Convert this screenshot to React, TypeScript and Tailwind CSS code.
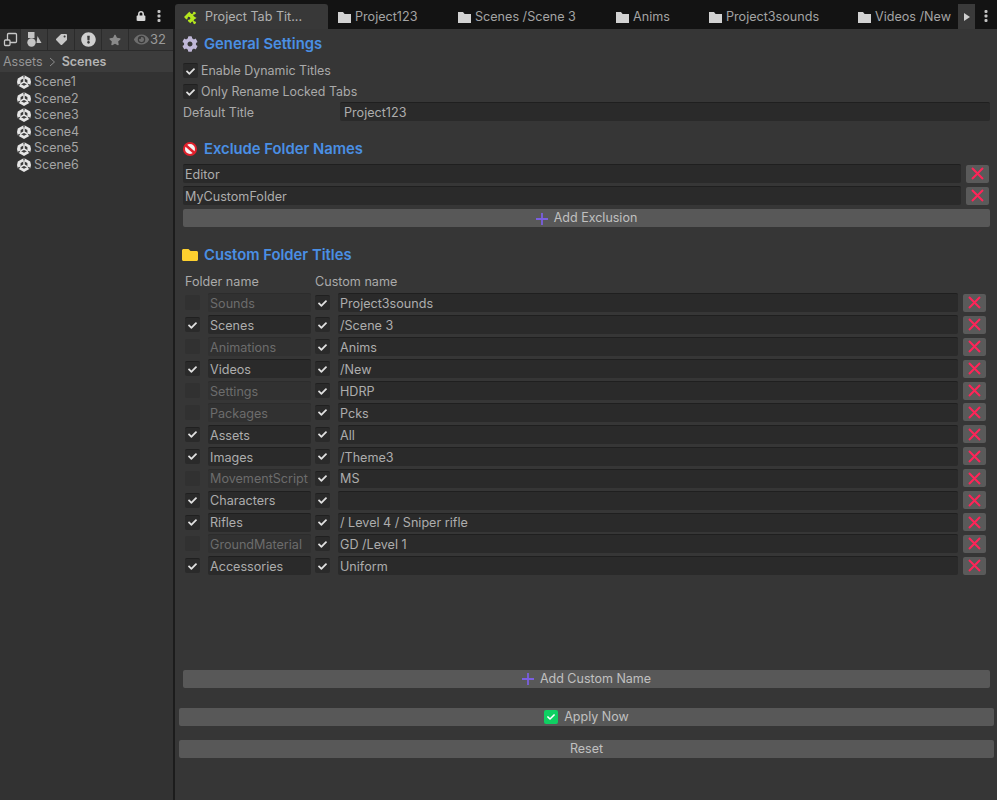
import React from "react";
import { FaLock, FaTag, FaStar, FaEye, FaFolder, FaCog, FaPuzzlePiece, FaExclamationCircle, FaCheck } from "react-icons/fa";

const Dots = () => (
  <svg width="4" height="12" viewBox="0 0 4 12" fill="#c4c4c4"><rect x="0.5" y="0" width="3" height="3" rx="1" /><rect x="0.5" y="4.5" width="3" height="3" rx="1" /><rect x="0.5" y="9" width="3" height="3" rx="1" /></svg>
);

const Folder = () => (
  <svg width="13" height="11" viewBox="0 0 13 11" className="shrink-0"><path d="M0 0h5l1.6 2H13v9H0z" fill="#d2d2d2" /></svg>
);

const UnityIcon = () => (
  <svg width="14" height="14" viewBox="0 0 14 14" className="shrink-0">
    <path d="M7 0 13.2 3.4 14 7l-.8 3.6L7 14 .8 10.6 0 7l.8-3.6z" fill="#e6e6e6" />
    <path d="M7 3.2 10.4 5.1v3.8L7 10.8 3.6 8.9V5.1z" fill="#3a3a3a" />
    <path d="M7 7V3.2M7 7l3.4 1.9M7 7 3.6 8.9" stroke="#e6e6e6" strokeWidth="1.5" />
    <path d="M7 0v2.4M13.4 10.6 11.2 9.4M.6 10.6 2.8 9.4" stroke="#3a3a3a" strokeWidth="1.2" />
  </svg>
);

const X = () => (
  <button className="w-[23px] h-[18px] bg-[#5a5a5a] rounded-[2px] flex items-center justify-center shrink-0">
    <svg width="13" height="13" viewBox="0 0 13 13"><path d="M1 1l11 11M12 1 1 12" stroke="#ff2458" strokeWidth="2" /></svg>
  </button>
);

const Check = ({ on = true }: { on?: boolean }) => (
  <div className={`w-[15px] h-[15px] rounded-[2px] flex items-center justify-center shrink-0 ${on ? "bg-[#2a2a2a] border-t border-[#202020]" : "bg-[#313131]"}`}>
    {on && <FaCheck className="text-[#e0e0e0] text-[9px]" />}
  </div>
);

const Field = ({ children, cls, dim = false }: { children?: React.ReactNode; cls: string; dim?: boolean }) => (
  <div className={`h-[19px] pt-[2px] rounded-[2px] flex items-center text-[12.6px] leading-none truncate ${dim ? "bg-[#313131] border-t border-[#2c2c2c] text-[#6c6c6c]" : "bg-[#2a2a2a] border-t border-[#1f1f1f] text-[#adadad]"} ${cls}`}>{children}</div>
);

const Btn = ({ children, cls }: { children: React.ReactNode; cls: string }) => (
  <div className={`h-[18px] pt-[1px] bg-[#585858] rounded-[2px] flex items-center justify-center gap-[6px] text-[#c0c0c0] text-[12.5px] leading-none ${cls}`}>{children}</div>
);

const Plus = () => (
  <svg width="12" height="12" viewBox="0 0 12 12"><path d="M6 0v12M0 6h12" stroke="#7a5fe0" strokeWidth="1.8" /></svg>
);

const Heading = ({ icon, children, cls }: { icon: React.ReactNode; children: React.ReactNode; cls: string }) => (
  <div className={`flex items-center h-[20px] ${cls}`}>
    <div className="w-[17px] flex justify-center shrink-0">{icon}</div>
    <div className="ml-[6px] text-[#4a8fe4] text-[14.8px] font-semibold leading-none">{children}</div>
  </div>
);

const rows: [boolean, string, string][] = [
  [false, "Sounds", "Project3sounds"],
  [true, "Scenes", "/Scene 3"],
  [false, "Animations", "Anims"],
  [true, "Videos", "/New"],
  [false, "Settings", "HDRP"],
  [false, "Packages", "Pcks"],
  [true, "Assets", "All"],
  [true, "Images", "/Theme3"],
  [false, "MovementScript", "MS"],
  [true, "Characters", ""],
  [true, "Rifles", "/ Level 4 / Sniper rifle"],
  [false, "GroundMaterial", "GD /Level 1"],
  [true, "Accessories", "Uniform"],
];

const tabs: [string, string][] = [
  ["Project123", "w-[120px]"],
  ["Scenes /Scene 3", "w-[158px]"],
  ["Anims", "w-[93px]"],
  ["Project3sounds", "w-[149px]"],
  ["Videos /New", "w-[110px]"],
];

export default function App() {
  return (
    <div className="w-[997px] h-[800px] overflow-hidden bg-[#363636] flex flex-col text-[12.6px] text-[#aaaaaa]" style={{ fontFamily: "Inter, 'Liberation Sans', sans-serif" }}>
      {/* top strip */}
      <div className="h-[29px] bg-[#131313] flex shrink-0">
        <div className="w-[175px] flex items-center justify-end gap-[11px] pr-[14px] pt-[3px] shrink-0 text-[#d8d8d8]">
          <FaLock className="text-[10px]" />
          <Dots />
        </div>
        <div className="w-[153px] mt-[4px] pt-[1px] bg-[#383838] rounded-t-[3px] flex items-center pl-[11px] gap-[6px] shrink-0">
          <FaPuzzlePiece className="text-[#b4e61e] text-[13px] rotate-45" />
          <span className="text-[#b0b0b0]">Project Tab Tit...</span>
        </div>
        {tabs.map(([t, w]) => (
          <div key={t} className={`${w} flex items-center pl-[10px] pt-[5px] gap-[4px] shrink-0 text-[#a4a4a4] whitespace-nowrap`}>
            <Folder />
            <span>{t}</span>
          </div>
        ))}
        <div className="w-[17px] mt-[4px] bg-[#3a3a3a] flex items-center justify-center shrink-0">
          <svg width="6" height="8" viewBox="0 0 6 8"><path d="M0 0l6 4-6 4z" fill="#d0d0d0" /></svg>
        </div>
        <div className="flex-1 flex items-center justify-center pt-[3px]"><Dots /></div>
      </div>

      <div className="flex flex-1 min-h-0">
        {/* left panel */}
        <div className="w-[173px] bg-[#323232] flex flex-col shrink-0">
          <div className="h-[22px] bg-[#3a3a3a] border-b border-[#2b2b2b] flex items-center text-[#9a9a9a] shrink-0">
            <div className="w-[21px] h-[21px] flex items-center justify-center border-r border-[#2b2b2b] bg-[#2f2f2f]">
              <svg width="15" height="15" viewBox="0 0 15 15" fill="none" stroke="#c8c8c8" strokeWidth="1.3"><rect x="4.5" y="1.5" width="9" height="9" rx="1" /><rect x="1.5" y="8" width="5.5" height="5.5" rx="1" fill="#2f2f2f" /></svg>
            </div>
            <div className="w-[27px] h-[21px] flex items-center justify-center border-r border-[#2b2b2b]">
              <svg width="15" height="15" viewBox="0 0 15 15" fill="#c4c4c4"><circle cx="4.5" cy="10.5" r="4.2" /><rect x="1" y="0" width="6.5" height="6" /><path d="M10.5 4l4 7h-5z" /></svg>
            </div>
            <div className="w-[27px] h-[21px] flex items-center justify-center border-r border-[#2b2b2b]"><FaTag className="text-[#c8c8c8] text-[11px] -scale-x-100" /></div>
            <div className="w-[27px] h-[21px] flex items-center justify-center border-r border-[#2b2b2b]"><FaExclamationCircle className="text-[#d0d0d0] text-[15px]" /></div>
            <div className="w-[27px] h-[21px] flex items-center justify-center border-r border-[#2b2b2b]"><FaStar className="text-[#8a8a8a] text-[12px]" /></div>
            <div className="flex items-center gap-[1px] pl-[5px] text-[13px] leading-none">
              <FaEye className="text-[#6e6e6e] text-[15px]" />
              <span>32</span>
            </div>
          </div>
          <div className="h-[21px] pt-[1px] bg-[#3c3c3c] flex items-center pl-[3px] gap-[6px] text-[12.5px] leading-none shrink-0">
            <span className="text-[#969696]">Assets</span>
            <svg width="7" height="10" viewBox="0 0 7 10" fill="none" stroke="#8c8c8c" strokeWidth="1"><path d="M1 1l4.5 4L1 9" /></svg>
            <span className="text-[#b4b4b4] font-semibold">Scenes</span>
          </div>
          <div className="pt-[2px] pl-[17px] flex flex-col">
            {["Scene1", "Scene2", "Scene3", "Scene4", "Scene5", "Scene6"].map((s) => (
              <div key={s} className="h-[16.6px] flex items-center gap-[3px] text-[#a4a4a4] text-[12.5px] leading-none">
                <UnityIcon />
                <span>{s}</span>
              </div>
            ))}
          </div>
        </div>
        <div className="w-[2px] bg-[#1c1c1c] shrink-0" />

        {/* right panel */}
        <div className="flex-1 flex flex-col min-w-0">
          <Heading cls="mt-[5px] ml-[6px]" icon={<FaCog className="text-[#c0b8d8] text-[16px]" />}>General Settings</Heading>
          <div className="mt-[6px] ml-[8px] h-[21px] flex items-center gap-[3px] text-[12.45px]"><Check /><span className="pt-[1px]">Enable Dynamic Titles</span></div>
          <div className="ml-[8px] h-[21px] flex items-center gap-[3px] text-[12.45px]"><Check /><span className="pt-[1px]">Only Rename Locked Tabs</span></div>
          <div className="ml-[8px] mr-[7px] h-[19px] flex items-center">
            <span className="w-[157px] shrink-0 text-[12.45px] pt-[3px]">Default Title</span>
            <Field cls="flex-1 pl-[4px]">Project123</Field>
          </div>
          <Heading cls="mt-[18px] ml-[6px]" icon={
            <svg width="14" height="14" viewBox="0 0 14 14"><circle cx="7" cy="7" r="6" fill="#f4f4f4" stroke="#e0202c" strokeWidth="2" /><path d="M2.5 3 11.5 11" stroke="#e0202c" strokeWidth="2.4" /></svg>
          }>Exclude Folder Names</Heading>
          <div className="mt-[5px] ml-[8px] mr-[8px] flex flex-col gap-[3px]">
            <div className="flex items-center gap-[5px]"><Field cls="flex-1 pl-[2px]">Editor</Field><X /></div>
            <div className="flex items-center gap-[5px]"><Field cls="flex-1 pl-[2px]">MyCustomFolder</Field><X /></div>
            <Btn cls="mt-[1px] mr-[-1px]"><Plus /><span>Add Exclusion</span></Btn>
          </div>
          <Heading cls="mt-[18px] ml-[6px]" icon={<FaFolder className="text-[#fdd02f] text-[16px]" />}>Custom Folder Titles</Heading>
          <div className="mt-[6px] ml-[10px] h-[21px] pt-[2px] flex items-center">
            <span className="w-[130px]">Folder name</span>
            <span>Custom name</span>
          </div>
          <div className="ml-[10px] mr-[11px] flex flex-col">
            {rows.map(([on, a, b]) => (
              <div key={a} className="h-[21.92px] flex items-center">
                <Check on={on} />
                <Field dim={!on} cls="ml-[8px] w-[103px] pl-[2px] shrink-0">{a}</Field>
                <div className="ml-[4px]"><Check /></div>
                <Field cls="ml-[8px] flex-1 pl-[2px]">{b}</Field>
                <div className="ml-[5px]"><X /></div>
              </div>
            ))}
          </div>
          <Btn cls="mt-[93px] ml-[8px] mr-[7px]"><Plus /><span>Add Custom Name</span></Btn>
          <Btn cls="mt-[20px] ml-[4px] mr-[3px]">
            <span className="w-[14px] h-[14px] bg-[#0fcf62] rounded-[2px] flex items-center justify-center"><FaCheck className="text-white text-[8px]" /></span>
            <span>Apply Now</span>
          </Btn>
          <Btn cls="mt-[14px] ml-[4px] mr-[3px]"><span>Reset</span></Btn>
        </div>
      </div>
    </div>
  );
}
